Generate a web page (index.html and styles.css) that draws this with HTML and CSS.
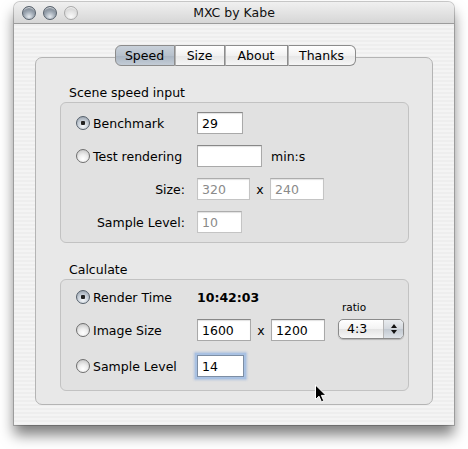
FILE: index.html
```html
<!DOCTYPE html>
<html>

<head>
    <meta charset="UTF-8">
    <meta name="viewport" content="width=device-width,initial-scale=1,user-scalable=no">
    <link rel="stylesheet" href="styles.css">
    <title>MXC by Kabe</title>
</head>

<body>
    <div id="window">
        <div class="titlebar">
            <div class="lights">
                <span class="light"></span>
                <span class="light"></span>
                <span class="light light-off"></span>
            </div>
            <div class="title">MXC by Kabe</div>
        </div>
        <div class="content">
            <div class="tabs">
                <span class="tab tab-speed selected">Speed</span>
                <span class="tab tab-size">Size</span>
                <span class="tab tab-about">About</span>
                <span class="tab tab-thanks">Thanks</span>
            </div>
            <div class="panel">
                <div class="group-label">Scene speed input</div>
                <div class="group">
                    <div class="row">
                        <label class="lead"><span class="radio checked"></span>Benchmark</label>
                        <span class="field w46">29</span>
                    </div>
                    <div class="row">
                        <label class="lead"><span class="radio"></span>Test rendering</label>
                        <span class="field w65"></span>
                        <span class="unit">min:s</span>
                    </div>
                    <div class="row">
                        <span class="lead right">Size:</span>
                        <span class="field w53 disabled">320</span>
                        <span class="times">x</span>
                        <span class="field w54 disabled">240</span>
                    </div>
                    <div class="row">
                        <span class="lead right">Sample Level:</span>
                        <span class="field w45 disabled">10</span>
                    </div>
                </div>

                <div class="group-label second">Calculate</div>
                <div class="group group-calc">
                    <div class="row">
                        <label class="lead"><span class="radio checked"></span>Render Time</label>
                        <span class="result">10:42:03</span>
                    </div>
                    <div class="row">
                        <label class="lead"><span class="radio"></span>Image Size</label>
                        <span class="field w54">1600</span>
                        <span class="times">x</span>
                        <span class="field w54">1200</span>
                        <div class="ratio">
                            <span class="ratio-label">ratio</span>
                            <span class="popup">
                                <span class="popup-value">4:3</span>
                                <span class="popup-arrows">
                                    <svg width="8" height="12" viewBox="0 0 8 12">
                                        <path d="M4 1 L7 5 L1 5 Z M4 11 L1 7 L7 7 Z" fill="#111"/>
                                    </svg>
                                </span>
                            </span>
                        </div>
                    </div>
                    <div class="row row-last">
                        <label class="lead"><span class="radio"></span>Sample Level</label>
                        <span class="field w47 focused">14</span>
                    </div>
                </div>
            </div>
        </div>
    </div>

    <svg class="cursor" width="13" height="20" viewBox="0 0 13 20">
        <path d="M1.5 1 L1.5 15.5 L5 12.2 L7.4 17.8 L9.8 16.8 L7.4 11.4 L12 11.4 Z" fill="#000" stroke="#fff" stroke-width="1"/>
    </svg>
</body>

</html>
```

FILE: styles.css
```css
*,
*::before,
*::after {
    box-sizing: border-box;
    padding: 0;
    margin: 0;
}

body {
    width: 468px;
    height: 449px;
    overflow: hidden;
    background: #fff;
    font-family: "DejaVu Sans", "Liberation Sans", sans-serif;
    font-size: 12.5px;
    color: #000;
}

#window {
    display: flex;
    flex-direction: column;
    width: 440px;
    height: 423px;
    margin: 2px 0 0 14px;
    border-radius: 6px 6px 0 0;
    background: #ececec;
    box-shadow: 0 10px 14px rgba(0, 0, 0, 0.5), 0 0 0 1px rgba(0, 0, 0, 0.2);
}

/* title bar */

.titlebar {
    display: grid;
    grid-template-columns: 1fr auto 1fr;
    align-items: center;
    height: 22px;
    border-bottom: 1px solid #9c9c9c;
    border-radius: 6px 6px 0 0;
    background: linear-gradient(#f0f0f0, #d6d6d6);
}

.lights {
    display: flex;
    gap: 7px;
    padding-left: 8px;
}

.light {
    width: 14px;
    height: 14px;
    border-radius: 50%;
    border: 1px solid #56606b;
    background: radial-gradient(circle at 50% 80%, #e4e9ee 0, #9ea8b3 45%, #66707c 100%);
    box-shadow: inset 0 2px 1px -1px rgba(255, 255, 255, 0.8);
}

.light-off {
    border-color: #a9a9a9;
    background: radial-gradient(circle at 50% 80%, #fafafa 0, #e2e2e2 50%, #c8c8c8 100%);
}

.title {
    font-size: 12.5px;
    color: #111;
}

/* content */

.content {
    display: flex;
    flex: 1;
    flex-direction: column;
    padding: 21px 21px 20px;
    background: repeating-linear-gradient(#eeeeee 0, #eeeeee 2px, #f4f4f4 2px, #f4f4f4 4px);
}

.tabs {
    position: relative;
    z-index: 1;
    display: flex;
    justify-content: center;
    height: 21px;
    margin-left: 2px;
}

.tab {
    display: flex;
    align-items: center;
    justify-content: center;
    height: 21px;
    border: 1px solid #8c8c8c;
    border-left: 1px solid #b4b4b4;
    background: linear-gradient(#ffffff, #f1f1f1 50%, #e6e6e6 51%, #f6f6f6);
}

.tab-speed {
    width: 60px;
    border-left-color: #8c8c8c;
    border-radius: 6px 0 0 6px;
}

.tab-size {
    width: 50px;
}

.tab-about {
    width: 63px;
}

.tab-thanks {
    width: 68px;
    border-radius: 0 6px 6px 0;
}

.tab.selected {
    background: linear-gradient(#c9d1da, #b7c1cc 50%, #a9b4c1 51%, #c3ccd6);
    border-right-color: #8c8c8c;
}

.panel {
    flex: 1;
    margin-top: -9px;
    padding: 27px 23px 0 24px;
    border: 1px solid #b4b4b4;
    border-radius: 7px;
    background: #e8e8e8;
}

.group-label {
    height: 15px;
    line-height: 15px;
    margin: 0 0 2px 9px;
}

.group-label.second {
    margin-top: 19px;
}

.group {
    display: flex;
    flex-direction: column;
    gap: 11px;
    padding: 9px 0 9px 15px;
    border: 1px solid #c2c2c2;
    border-radius: 6px;
    background: #e1e1e1;
}

.group-calc {
    padding: 6px 0 13px 15px;
}

.row {
    display: flex;
    align-items: center;
    height: 22px;
}

.row-last {
    margin-top: 3px;
}

.lead {
    display: flex;
    align-items: center;
    gap: 3px;
    width: 121px;
    flex-shrink: 0;
}

.lead.right {
    justify-content: flex-end;
    padding-right: 12px;
}

.radio {
    width: 14px;
    height: 14px;
    border-radius: 50%;
    border: 1px solid #6f6f6f;
    background: radial-gradient(circle at 50% 75%, #ffffff 0, #eeeeee 40%, #bcbcbc 100%);
}

.radio.checked {
    border-color: #55606c;
    background: radial-gradient(circle, #222 0, #222 2px, transparent 2.5px),
        radial-gradient(circle at 50% 75%, #f4f7fa 0, #c5cdd6 50%, #8d97a3 100%);
}

.field {
    display: flex;
    align-items: center;
    height: 22px;
    padding: 0 4px;
    border: 1px solid #a9a9a9;
    border-top-color: #888;
    background: #fff;
    box-shadow: inset 0 1px 1px rgba(0, 0, 0, 0.12);
}

.field.disabled {
    color: #8a8a8a;
    border-color: #c4c4c4;
    border-top-color: #adadad;
}

.field.focused {
    border-color: #7d8ea4;
    box-shadow: 0 0 0 2px #a9c1e2, 0 0 2px 3px rgba(120, 160, 220, 0.45);
}

.w45 { width: 45px; }
.w46 { width: 46px; }
.w47 { width: 47px; }
.w53 { width: 53px; }
.w54 { width: 54px; }
.w65 { width: 65px; }

.unit {
    margin-left: 9px;
}

.times {
    width: 20px;
    text-align: center;
}

.result {
    font-weight: bold;
}

.ratio {
    display: flex;
    flex-direction: column;
    align-self: flex-end;
    margin: 0 0 2px 13px;
}

.ratio-label {
    height: 13px;
    margin: 0 0 5px 4px;
    font-size: 10.5px;
    line-height: 13px;
}

.popup {
    display: flex;
    width: 66px;
    height: 20px;
    border: 1px solid #8a8a8a;
    border-radius: 5px;
    overflow: hidden;
    background: linear-gradient(#ffffff, #f3f3f3 50%, #e4e4e4 51%, #f7f7f7);
    box-shadow: 0 1px 1px rgba(0, 0, 0, 0.2);
}

.popup-value {
    flex: 1;
    padding-left: 8px;
    line-height: 18px;
}

.popup-arrows {
    display: flex;
    align-items: center;
    justify-content: center;
    width: 20px;
    border-left: 1px solid #b5b5b5;
    background: linear-gradient(#e9ecef, #d3d8de 50%, #c2c9d1 51%, #dde2e7);
}

.cursor {
    position: absolute;
    left: 314px;
    top: 384px;
}
```
